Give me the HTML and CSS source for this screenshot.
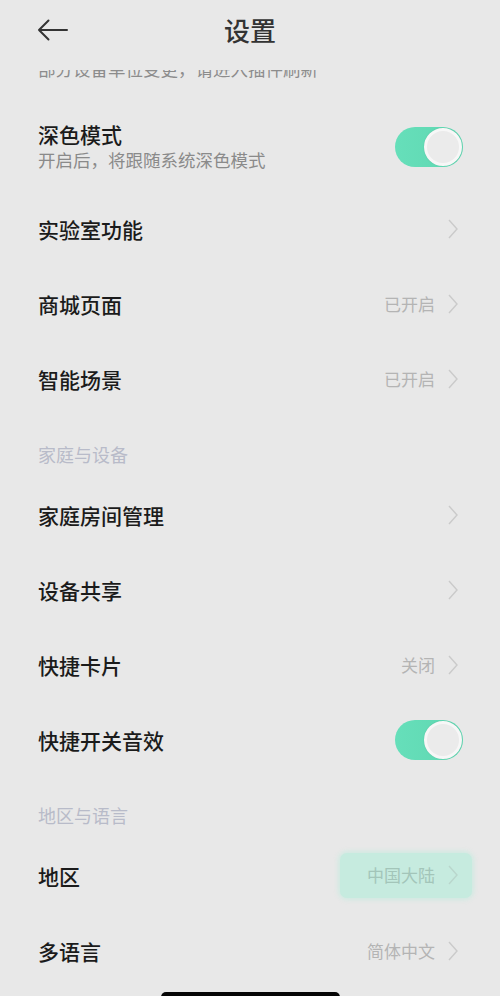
FILE: index.html
```html
<!DOCTYPE html>
<html lang="zh-CN">
<head>
<meta charset="utf-8">
<title>设置</title>
<link rel="stylesheet" href="styles.css">
</head>
<body>
<div class="screen">
  <header class="topbar">
    <svg class="back" width="32" height="22" viewBox="0 0 32 22"><path d="M30 11H2M11.5 1.5L2 11l9.5 9.5" fill="none" stroke="#333" stroke-width="2" stroke-linecap="round" stroke-linejoin="round"/></svg>
    <h1 class="title">设置</h1>
  </header>
  <main class="viewport">
    <div class="content">
      <p class="note">部分设备单位变更，请进入插件刷新</p>

      <div class="row row-tall">
        <div class="texts">
          <div class="label">深色模式</div>
          <div class="sub">开启后，将跟随系统深色模式</div>
        </div>
        <span class="toggle"><span class="knob"></span></span>
      </div>

      <div class="row"><div class="label">实验室功能</div><span class="value"><svg class="chev" width="10" height="20" viewBox="0 0 10 20"><path d="M1 1l8 9-8 9" fill="none" stroke="#cacaca" stroke-width="1.4"/></svg></span></div>
      <div class="row"><div class="label">商城页面</div><span class="value">已开启<svg class="chev" width="10" height="20" viewBox="0 0 10 20"><path d="M1 1l8 9-8 9" fill="none" stroke="#cacaca" stroke-width="1.4"/></svg></span></div>
      <div class="row"><div class="label">智能场景</div><span class="value">已开启<svg class="chev" width="10" height="20" viewBox="0 0 10 20"><path d="M1 1l8 9-8 9" fill="none" stroke="#cacaca" stroke-width="1.4"/></svg></span></div>

      <div class="section">家庭与设备</div>

      <div class="row"><div class="label">家庭房间管理</div><span class="value"><svg class="chev" width="10" height="20" viewBox="0 0 10 20"><path d="M1 1l8 9-8 9" fill="none" stroke="#cacaca" stroke-width="1.4"/></svg></span></div>
      <div class="row"><div class="label">设备共享</div><span class="value"><svg class="chev" width="10" height="20" viewBox="0 0 10 20"><path d="M1 1l8 9-8 9" fill="none" stroke="#cacaca" stroke-width="1.4"/></svg></span></div>
      <div class="row"><div class="label">快捷卡片</div><span class="value">关闭<svg class="chev" width="10" height="20" viewBox="0 0 10 20"><path d="M1 1l8 9-8 9" fill="none" stroke="#cacaca" stroke-width="1.4"/></svg></span></div>
      <div class="row"><div class="label">快捷开关音效</div><span class="toggle"><span class="knob"></span></span></div>

      <div class="section">地区与语言</div>

      <div class="row"><div class="label">地区</div><span class="value value-hl">中国大陆<svg class="chev" width="10" height="20" viewBox="0 0 10 20"><path d="M1 1l8 9-8 9" fill="none" stroke="#b9d6cc" stroke-width="1.4"/></svg></span></div>
      <div class="row"><div class="label">多语言</div><span class="value">简体中文<svg class="chev" width="10" height="20" viewBox="0 0 10 20"><path d="M1 1l8 9-8 9" fill="none" stroke="#cacaca" stroke-width="1.4"/></svg></span></div>
    </div>
  </main>
  <div class="home-bar"></div>
</div>
</body>
</html>
```

FILE: styles.css
```css
* { box-sizing: border-box; }
html, body {
  margin: 0;
  padding: 0;
  background: #e8e8e8;
}
body {
  font-family: "Noto Sans CJK SC", "Noto Sans", sans-serif;
  color: #1b1b1b;
}
.screen {
  position: relative;
  width: 500px;
  height: 996px;
  overflow: hidden;
  background: #e8e8e8;
}
.topbar {
  position: relative;
  height: 70px;
  display: flex;
  align-items: flex-start;
  justify-content: center;
  padding-top: 15px;
}
.back {
  position: absolute;
  left: 37px;
  top: 19px;
}
.title {
  margin: 0;
  font-size: 26px;
  font-weight: 500;
  color: #333;
  line-height: 30px;
}
.viewport {
  height: 926px;
  overflow: hidden;
}
.content {
  margin-top: -12px;
}
.note {
  margin: 0;
  padding: 0 38px;
  font-size: 17.5px;
  line-height: 22px;
  color: #8c8c8c;
  height: 22px;
}
.row {
  display: flex;
  align-items: center;
  justify-content: space-between;
  height: 75px;
  padding: 0 42px 0 38px;
}
.row-tall {
  height: auto;
  padding-top: 41px;
  padding-bottom: 19px;
}
.texts {
  display: flex;
  flex-direction: column;
  gap: 1px;
}
.label {
  font-size: 21px;
  font-weight: 500;
  line-height: 26px;
  color: #1b1b1b;
}
.sub {
  font-size: 17.5px;
  line-height: 24px;
  color: #8a8a8a;
}
.value {
  display: flex;
  align-items: center;
  gap: 13px;
  font-size: 17px;
  color: #b4b4b4;
  line-height: 24px;
}
.chev { display: block; }
.value-hl {
  background: #c6ebdf;
  border-radius: 7px;
  padding: 10px 14px 11px 27px;
  margin-right: -14px;
  color: #a3c5b9;
  box-shadow: 0 0 4px 2px rgba(198, 235, 223, 0.7);
}
.toggle {
  position: relative;
  width: 68px;
  height: 40px;
  border-radius: 20px;
  background: linear-gradient(90deg, #66dfba 0%, #5fd7b1 100%);
  margin-right: -5px;
  flex: none;
}
.knob {
  position: absolute;
  right: 1px;
  top: 1px;
  width: 38px;
  height: 38px;
  border-radius: 50%;
  background: #ebebeb;
  border: 3px solid #f7f7f7;
  box-shadow: 0 0 1px rgba(60, 160, 130, 0.6);
}
.section {
  height: 61px;
  padding: 26px 38px 0;
  font-size: 18px;
  line-height: 24px;
  color: #b8bbc9;
}
.home-bar {
  position: absolute;
  left: 161px;
  top: 992px;
  width: 179px;
  height: 10px;
  border-radius: 5px;
  background: #050505;
}
```
